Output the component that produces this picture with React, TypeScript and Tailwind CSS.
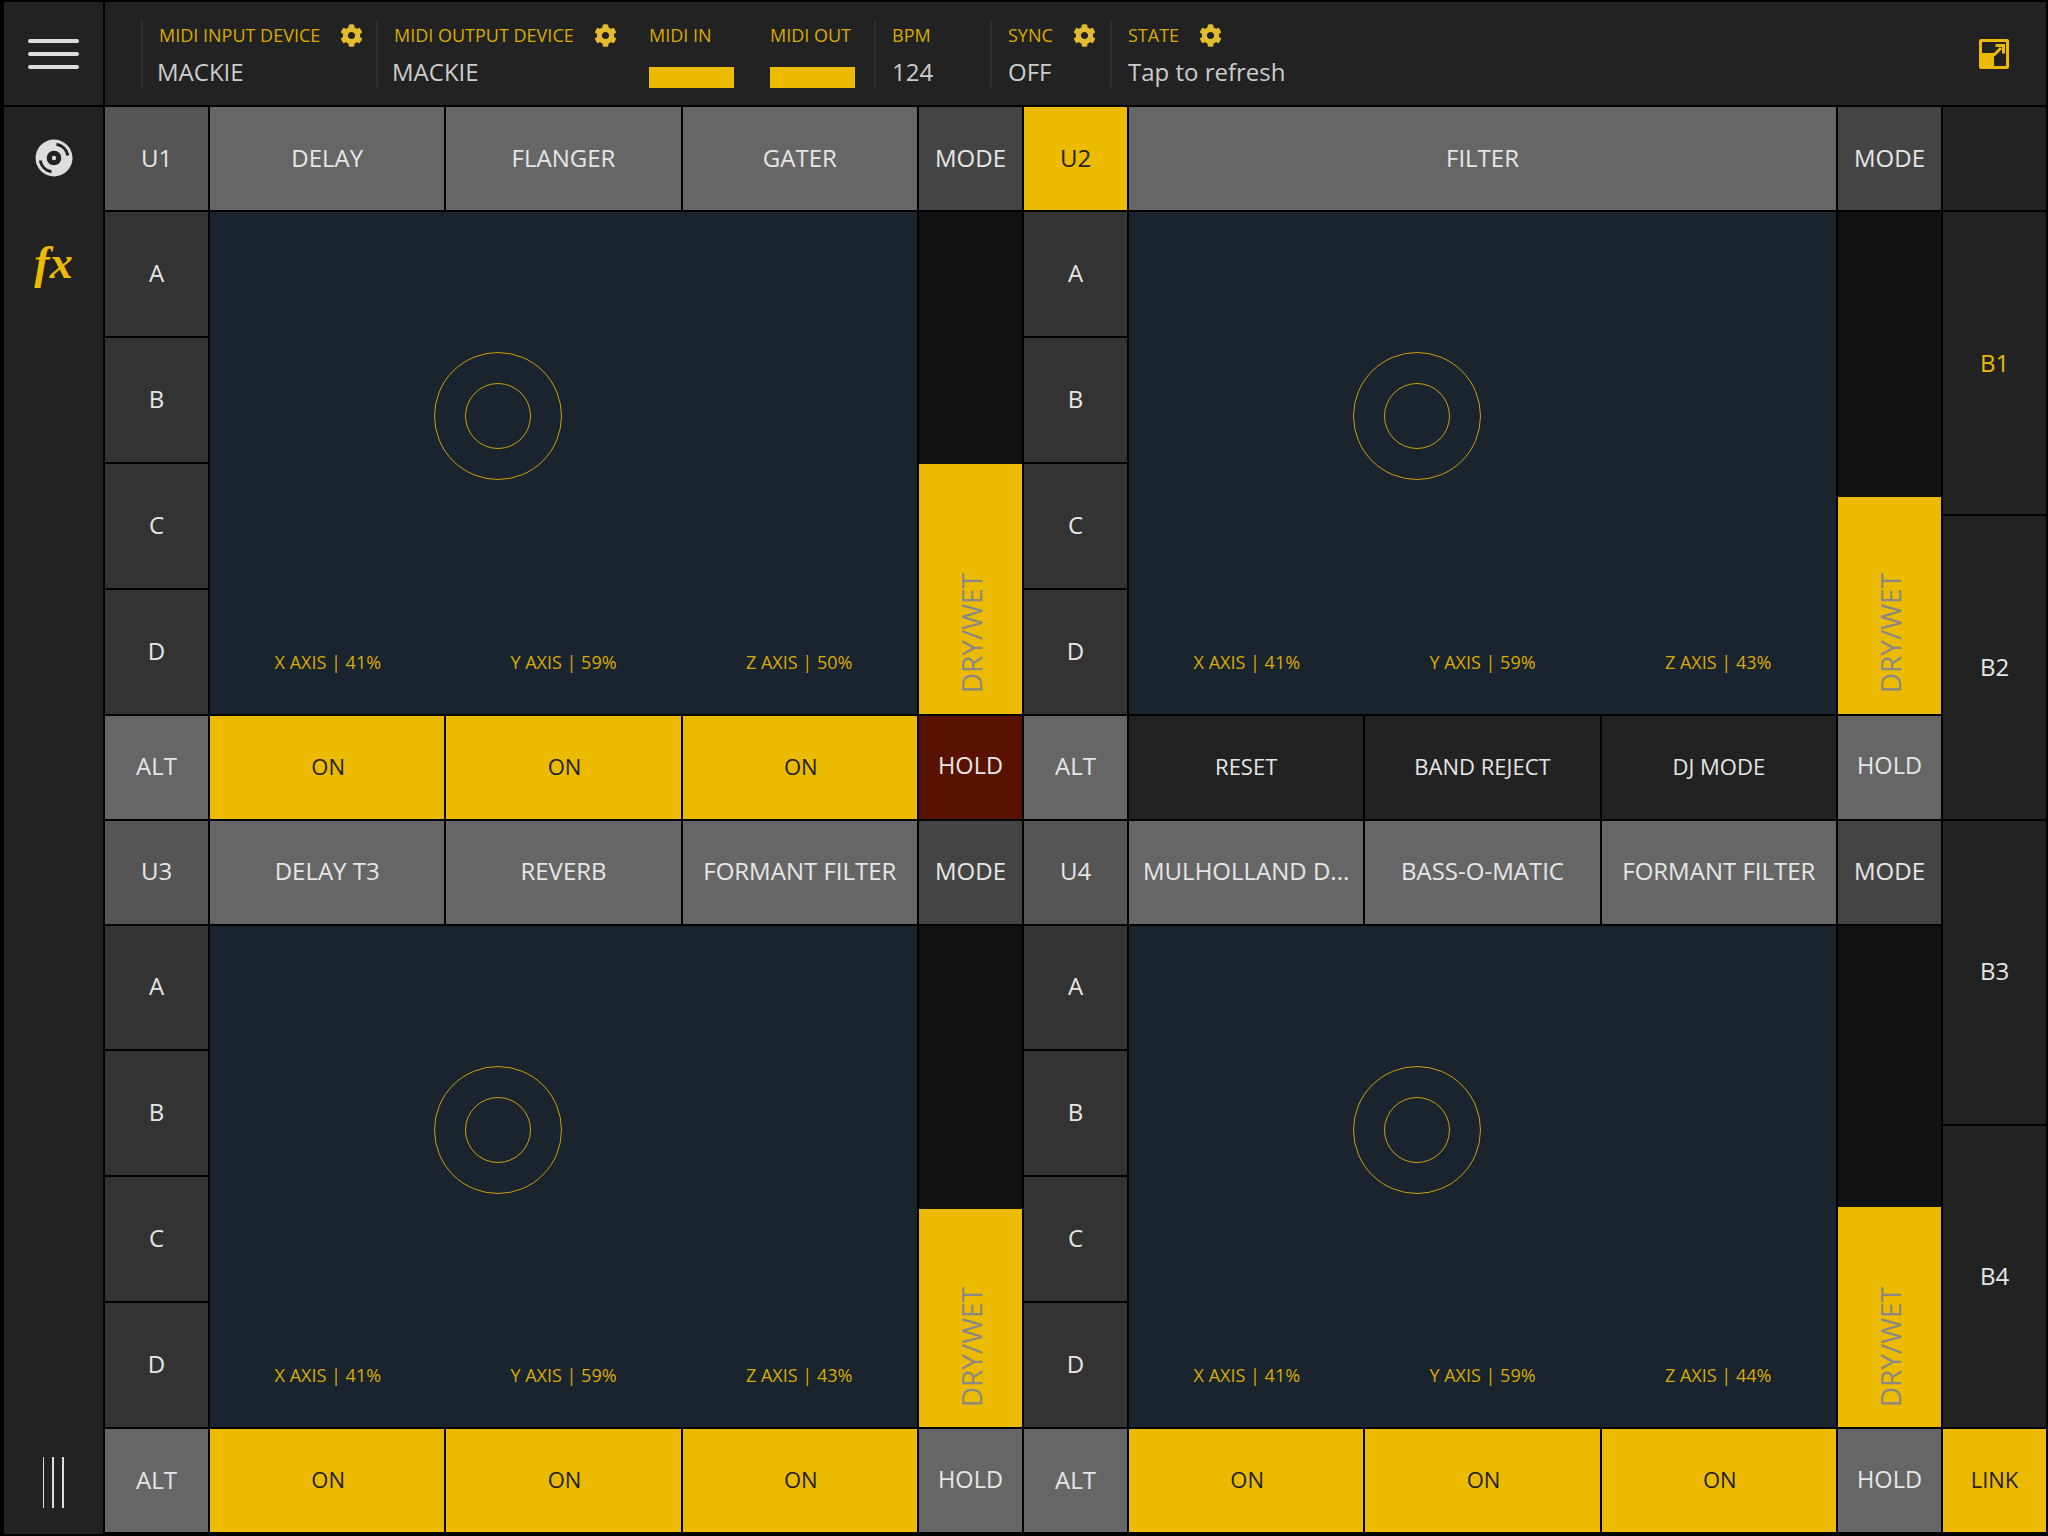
import * as React from "react";
import { FaCog } from "react-icons/fa";

const YELLOW = "bg-[#ecba00] text-[#222]";

interface UnitData {
  name: string;
  active?: boolean;
  tabs: string[];
  x: number;
  y: number;
  z: number;
  fader: number;
  toggles: { id: string; label: string; on: boolean }[];
  holdActive?: boolean;
}

const onRow = () => ["a", "b", "c"].map((id) => ({ id, label: "ON", on: true }));

const units: UnitData[] = [
  { name: "U1", tabs: ["DELAY", "FLANGER", "GATER"], x: 41, y: 59, z: 50, fader: 49.8, toggles: onRow(), holdActive: true },
  {
    name: "U2",
    active: true,
    tabs: ["FILTER"],
    x: 41,
    y: 59,
    z: 43,
    fader: 43.1,
    toggles: ["RESET", "BAND REJECT", "DJ MODE"].map((label) => ({ id: label, label, on: false })),
  },
  { name: "U3", tabs: ["DELAY T3", "REVERB", "FORMANT FILTER"], x: 41, y: 59, z: 43, fader: 43.4, toggles: onRow() },
  { name: "U4", tabs: ["MULHOLLAND D...", "BASS-O-MATIC", "FORMANT FILTER"], x: 41, y: 59, z: 44, fader: 43.9, toggles: onRow() },
];

function Cell({ className = "", children }: { className?: string; children?: React.ReactNode }) {
  return <div className={`flex min-w-0 items-center justify-center whitespace-nowrap pb-[2px] ${className}`}>{children}</div>;
}

function Unit({ unit }: { unit: UnitData }) {
  return (
    <div className="grid grid-cols-[103px_707px_103px] grid-rows-[103px_minmax(0,1fr)_103px] gap-[2px]">
      <Cell className={`text-[24px] ${unit.active ? YELLOW : "bg-[#555] text-[#e6e6e6]"}`}>{unit.name}</Cell>
      <div className="flex gap-[2px]">
        {unit.tabs.map((t) => (
          <Cell key={t} className="flex-1 basis-0 bg-[#666] text-[24px] text-[#e6e6e6]">
            {t}
          </Cell>
        ))}
      </div>
      <Cell className="bg-[#444] text-[24px] text-[#e6e6e6]">MODE</Cell>

      <div className="grid grid-rows-4 gap-[2px]">
        {["A", "B", "C", "D"].map((l) => (
          <Cell key={l} className="bg-[#333] text-[24px] text-[#e6e6e6]">
            {l}
          </Cell>
        ))}
      </div>

      {/* xy pad */}
      <div className="relative flex items-end bg-[#19242f] pb-[40px]">
        <div className="absolute left-[224px] top-[140px] flex h-[128px] w-[128px] items-center justify-center rounded-full border border-[#c9a00a]">
          <div className="h-[66px] w-[66px] rounded-full border border-[#c9a00a]" />
        </div>
        {[`X AXIS | ${unit.x}%`, `Y AXIS | ${unit.y}%`, `Z AXIS | ${unit.z}%`].map((t) => (
          <div key={t} className="flex-1 basis-0 text-center text-[18px] leading-[24px] text-[#d9ab00]">
            {t}
          </div>
        ))}
      </div>

      <div className="relative flex flex-col justify-end bg-[#111]">
        <div className="bg-[#ecba00]" style={{ height: `${unit.fader}%` }} />
        <div className="absolute bottom-[20px] left-0 right-0 flex justify-center">
          <span className="rotate-180 text-[28px] leading-none text-[#888] [writing-mode:vertical-rl]">DRY/WET</span>
        </div>
      </div>

      <Cell className="bg-[#666] text-[24px] text-[#e6e6e6]">ALT</Cell>
      <div className="flex gap-[2px]">
        {unit.toggles.map((t) => (
          <Cell key={t.id} className={`flex-1 basis-0 text-[22px] ${t.on ? `pl-[2px] ${YELLOW}` : "bg-[#222] text-[#e6e6e6]"}`}>
            {t.label}
          </Cell>
        ))}
      </div>
      <Cell className={`text-[23.5px] text-[#e6e6e6] ${unit.holdActive ? "bg-[#5a1200]" : "bg-[#666]"}`}>HOLD</Cell>
    </div>
  );
}

function Label({ children, gear }: { children: React.ReactNode; gear?: boolean }) {
  return (
    <div className="flex h-[26px] items-center text-[18px] leading-none text-[#d9ab00]">
      {children}
      {gear && <FaCog className="ml-[20px] text-[23px] text-[#e3bb2e]" />}
    </div>
  );
}

function Section({
  className = "",
  label,
  gear,
  value,
  valueClass = "",
}: {
  className?: string;
  label: string;
  gear?: boolean;
  value: string;
  valueClass?: string;
}) {
  return (
    <div className={`h-[67px] border-l-2 border-[#2f2f2f] pl-[16px] ${className}`}>
      <div className="pt-[2px]">
        <Label gear={gear}>{label}</Label>
      </div>
      <div className={`mt-[7px] text-[24px] leading-[33px] text-[#ccc] ${valueClass}`}>{value}</div>
    </div>
  );
}

function Meter({ className = "", label }: { className?: string; label: string }) {
  return (
    <div className={`h-[67px] ${className}`}>
      <div className="pt-[2px]">
        <Label>{label}</Label>
      </div>
      <div className="mt-[19px] h-[21px] w-[85px] bg-[#ecba00]" />
    </div>
  );
}

function TopBar() {
  return (
    <div className="flex items-center bg-[#222] pl-[36px] pr-[37px]">
      <Section className="w-[235px]" label="MIDI INPUT DEVICE" gear value="MACKIE" valueClass="-ml-[2px]" />
      <Section className="w-[273px]" label="MIDI OUTPUT DEVICE" gear value="MACKIE" valueClass="-ml-[2px]" />
      <Meter className="w-[121px]" label="MIDI IN" />
      <Meter className="w-[104px]" label="MIDI OUT" />
      <Section className="w-[116px]" label="BPM" value="124" />
      <Section className="w-[120px]" label="SYNC" gear value="OFF" />
      <Section label="STATE" gear value="Tap to refresh" />
      <svg className="ml-auto" width="30" height="30" viewBox="0 0 30 30">
        <rect width="30" height="30" rx="2" fill="#ecba00" />
        <path d="M3 3h24v24H15V14H3z" fill="#222" />
        <path d="M14.5 16.5 22 9M16.5 6.5h8v8" fill="none" stroke="#ecba00" strokeWidth="3" />
      </svg>
    </div>
  );
}

function Sidebar() {
  return (
    <div className="flex h-[1427px] flex-col items-center bg-[#222] pt-[32px] pb-[26px]">
      <svg width="38" height="38" viewBox="0 0 38 38">
        <circle cx="19" cy="19" r="18.5" fill="#ddd" />
        <circle cx="19" cy="19" r="7.3" fill="#222" />
        <circle cx="19" cy="19" r="2.2" fill="#ddd" />
        <path d="M21.5 5.2A14 14 0 0 1 32.8 16.5M16.5 32.8A14 14 0 0 1 5.2 21.5" fill="none" stroke="#222" strokeWidth="3" />
      </svg>
      <div className="mt-[63px] font-['Liberation_Serif',serif] text-[46px] font-bold italic leading-[46px] text-[#ecba00]">fx</div>
      <div className="mt-auto flex h-[51px] items-stretch">
        <div className="w-px bg-[#ddd]" />
        <div className="ml-[8px] w-[2px] bg-[#ddd]" />
        <div className="ml-[8px] w-[2px] bg-[#ddd]" />
      </div>
    </div>
  );
}

export default function App() {
  return (
    <div className="grid h-[1536px] w-[2048px] grid-cols-[99px_1941px] grid-rows-[103px_1427px] gap-[2px] overflow-hidden bg-black pl-[4px] pt-[2px] font-['Open_Sans',sans-serif]">
      <div className="flex flex-col items-center justify-center gap-[9px] bg-[#222]">
        <div className="h-[4px] w-[51px] rounded-full bg-[#ddd]" />
        <div className="h-[4px] w-[51px] rounded-full bg-[#ddd]" />
        <div className="h-[4px] w-[51px] rounded-full bg-[#ddd]" />
      </div>
      <TopBar />
      <Sidebar />
      <div className="grid h-[1425px] grid-cols-[917px_917px_103px] grid-rows-[711.5px_711.5px] gap-[2px]">
        <Unit unit={units[0]} />
        <Unit unit={units[1]} />
        <div className="flex flex-col gap-[2px]">
          <div className="h-[103px] bg-[#222]" />
          <Cell className="flex-1 basis-0 bg-[#222] !pb-0 text-[24px] text-[#ecba00]">B1</Cell>
          <Cell className="flex-1 basis-0 bg-[#222] !pb-0 text-[24px] text-[#e6e6e6]">B2</Cell>
        </div>
        <Unit unit={units[2]} />
        <Unit unit={units[3]} />
        <div className="flex flex-col gap-[2px]">
          <Cell className="flex-1 basis-0 bg-[#222] text-[24px] text-[#e6e6e6]">B3</Cell>
          <Cell className="flex-1 basis-0 bg-[#222] !pb-0 text-[24px] text-[#e6e6e6]">B4</Cell>
          <Cell className={`h-[103px] text-[22px] ${YELLOW}`}>LINK</Cell>
        </div>
      </div>
    </div>
  );
}
